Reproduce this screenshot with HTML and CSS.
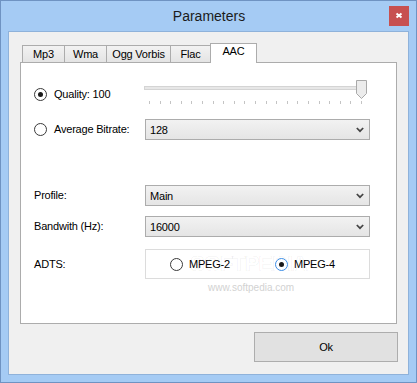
FILE: index.html
```html
<!DOCTYPE html>
<html lang="en">
<head>
	<meta charset="UTF-8">
	<title>Parameters</title>
	<link rel="stylesheet" href="styles.css">
</head>
<body>
	<div class="window">
		<div class="titlebar">
			<span></span>
			<div class="title">Parameters</div>
			<a href="javascript:;" class="closeBtn">
				<svg width="20" height="20" viewBox="0 0 20 20"><path d="M7.5 7.5 L12.5 11.5 M12.5 7.5 L7.5 11.5" stroke="#fff" stroke-width="2" fill="none"/></svg>
			</a>
		</div>
		<div class="client">
			<ul class="tabs">
				<li class="t1">Mp3</li>
				<li class="t2">Wma</li>
				<li class="t3">Ogg Vorbis</li>
				<li class="t4">Flac</li>
				<li class="t5 cur">AAC</li>
			</ul>
			<div class="panel">
				<div class="row quality">
					<label class="lbl"><span class="radio on"></span>Quality: 100</label>
					<div class="field slider">
						<svg width="224" height="25" viewBox="0 0 224 25">
							<rect x="0.5" y="6.5" width="216" height="3" fill="#e7e7e7" stroke="#d4d4d4"/>
							<g fill="#c4c4c4">
								<rect x="5" y="21" width="1" height="3"/><rect x="16" y="21" width="1" height="3"/>
								<rect x="26" y="21" width="1" height="3"/><rect x="37" y="21" width="1" height="3"/>
								<rect x="47" y="21" width="1" height="3"/><rect x="58" y="21" width="1" height="3"/>
								<rect x="69" y="21" width="1" height="3"/><rect x="79" y="21" width="1" height="3"/>
								<rect x="90" y="21" width="1" height="3"/><rect x="100" y="21" width="1" height="3"/>
								<rect x="111" y="21" width="1" height="3"/><rect x="122" y="21" width="1" height="3"/>
								<rect x="132" y="21" width="1" height="3"/><rect x="143" y="21" width="1" height="3"/>
								<rect x="153" y="21" width="1" height="3"/><rect x="164" y="21" width="1" height="3"/>
								<rect x="175" y="21" width="1" height="3"/><rect x="185" y="21" width="1" height="3"/>
								<rect x="196" y="21" width="1" height="3"/><rect x="206" y="21" width="1" height="3"/>
								<rect x="217" y="21" width="1" height="3"/>
							</g>
							<path d="M212.5 0.5 H222.5 V13.5 L217.5 18.5 L212.5 13.5 Z" fill="#ececec" stroke="#a9a9a9"/>
						</svg>
					</div>
				</div>
				<div class="row avg">
					<label class="lbl"><span class="radio"></span>Average Bitrate:</label>
					<div class="field combo"><span>128</span><svg width="8" height="6" viewBox="0 0 8 6"><path d="M0.8 1 L4 4.2 L7.2 1" stroke="#444" stroke-width="1.7" fill="none"/></svg></div>
				</div>
				<div class="row profile">
					<label class="lbl">Profile:</label>
					<div class="field combo"><span>Main</span><svg width="8" height="6" viewBox="0 0 8 6"><path d="M0.8 1 L4 4.2 L7.2 1" stroke="#444" stroke-width="1.7" fill="none"/></svg></div>
				</div>
				<div class="row bandwidth">
					<label class="lbl">Bandwith (Hz):</label>
					<div class="field combo"><span>16000</span><svg width="8" height="6" viewBox="0 0 8 6"><path d="M0.8 1 L4 4.2 L7.2 1" stroke="#444" stroke-width="1.7" fill="none"/></svg></div>
				</div>
				<div class="row adts">
					<label class="lbl">ADTS:</label>
					<div class="field group">
						<label class="opt"><span class="radio"></span>MPEG-2</label>
						<label class="opt"><span class="radio on focus"></span>MPEG-4</label>
						<div class="bigMark">SOFTPEDIA</div>
					</div>
				</div>
				<div class="mark">www.softpedia.com</div>
			</div>
			<div class="footer">
				<a href="javascript:;" class="okBtn">Ok</a>
			</div>
		</div>
	</div>
</body>
</html>
```

FILE: styles.css
```css
*{
	margin: 0;
	padding: 0;
	box-sizing: border-box;
}
body{
	font-family: "Liberation Sans", Arial, sans-serif;
	font-size: 11px;
	letter-spacing: -0.2px;
	color: #000;
	background: #fff;
}
.window{
	width: 417px;
	height: 383px;
	border: 1px solid #6f93c2;
	background-color: #a5cbf4;
	display: flex;
	flex-direction: column;
}
.titlebar{
	height: 30px;
	display: grid;
	grid-template-columns: 1fr auto 1fr;
}
.title{
	font-size: 14px;
	letter-spacing: 0;
	line-height: 30px;
	color: #1b1b1b;
	padding-left: 1px;
}
.closeBtn{
	justify-self: end;
	width: 20px;
	height: 20px;
	margin-top: 5px;
	margin-right: 7px;
	background-color: #c75050;
	display: block;
}
.closeBtn svg{
	display: block;
}
.client{
	flex: 1;
	margin: 0 7px 7px;
	border: 1px solid #8fb2da;
	background-color: #f0f0f0;
	padding-top: 11px;
}
.tabs{
	list-style: none;
	display: flex;
	align-items: flex-end;
	height: 19px;
	margin-left: 13px;
}
.tabs li{
	height: 17px;
	line-height: 16px;
	border: 1px solid #acacac;
	border-bottom: none;
	background: linear-gradient(#f2f2f2, #e4e4e4);
	text-align: center;
	position: relative;
}
.tabs li + li{
	margin-left: -1px;
}
.tabs li.t1{ width: 43px; }
.tabs li.t2{ width: 43px; }
.tabs li.t3{ width: 65px; }
.tabs li.t4{ width: 41px; }
.tabs li.t5{ width: 47px; }
.tabs li.cur{
	height: 20px;
	line-height: 15px;
	margin-bottom: -1px;
	background: #fff;
	z-index: 2;
}
.panel{
	position: relative;
	margin-left: 11px;
	width: 377px;
	height: 262px;
	border: 1px solid #acacac;
	background-color: #fff;
	padding: 17px 26px 0 13px;
}
.row{
	display: flex;
	align-items: center;
}
.row .lbl{
	width: 111px;
	display: flex;
	align-items: center;
	line-height: 13px;
}
.row .field{
	width: 225px;
}
.quality{
	height: 25px;
	align-items: flex-start;
}
.quality .lbl{
	margin-top: 8px;
}
.slider{
	margin-left: -1px;
}
.slider svg{
	display: block;
}
.avg{
	margin-top: 14px;
}
.profile{
	margin-top: 45px;
}
.bandwidth{
	margin-top: 10px;
}
.adts{
	margin-top: 12px;
}
.combo{
	height: 21px;
	border: 1px solid #acacac;
	background: linear-gradient(#f2f2f2, #e5e5e5);
	display: flex;
	align-items: center;
	justify-content: space-between;
	padding: 0 5px 0 4px;
}
.combo svg{
	display: block;
	margin-top: 1px;
}
.radio{
	width: 13px;
	height: 13px;
	border: 1px solid #3a3a3a;
	border-radius: 50%;
	background-color: #fff;
	margin-right: 7px;
	display: flex;
	align-items: center;
	justify-content: center;
	flex-shrink: 0;
}
.radio.on::after{
	content: "";
	width: 5px;
	height: 5px;
	border-radius: 50%;
	background-color: #1a1a1a;
}
.radio.focus{
	border-color: #3d8ee6;
}
.group{
	position: relative;
	height: 30px;
	border: 1px solid #dcdcdc;
	display: flex;
	align-items: center;
	padding-left: 24px;
}
.opt{
	position: relative;
	z-index: 1;
	display: flex;
	align-items: center;
	line-height: 13px;
}
.opt .radio{
	margin-right: 6px;
}
.opt + .opt{
	margin-left: 45px;
}
/* faint watermark over the option box */
.bigMark{
	position: absolute;
	left: 44px;
	top: 1px;
	font-size: 22px;
	font-weight: bold;
	letter-spacing: -1px;
	color: transparent;
	-webkit-text-stroke: 1px rgba(0, 0, 0, 0.05);
	pointer-events: none;
}
.mark{
	margin-top: 3px;
	padding-left: 174px;
	font-size: 10px;
	letter-spacing: 0;
	color: #d2d2d2;
}
.footer{
	display: flex;
	justify-content: flex-end;
	margin-top: 8px;
	padding-right: 10px;
}
.okBtn{
	width: 144px;
	height: 30px;
	border: 1px solid #adadad;
	background-color: #e1e1e1;
	color: #000;
	text-decoration: none;
	display: flex;
	align-items: center;
	justify-content: center;
}
```
